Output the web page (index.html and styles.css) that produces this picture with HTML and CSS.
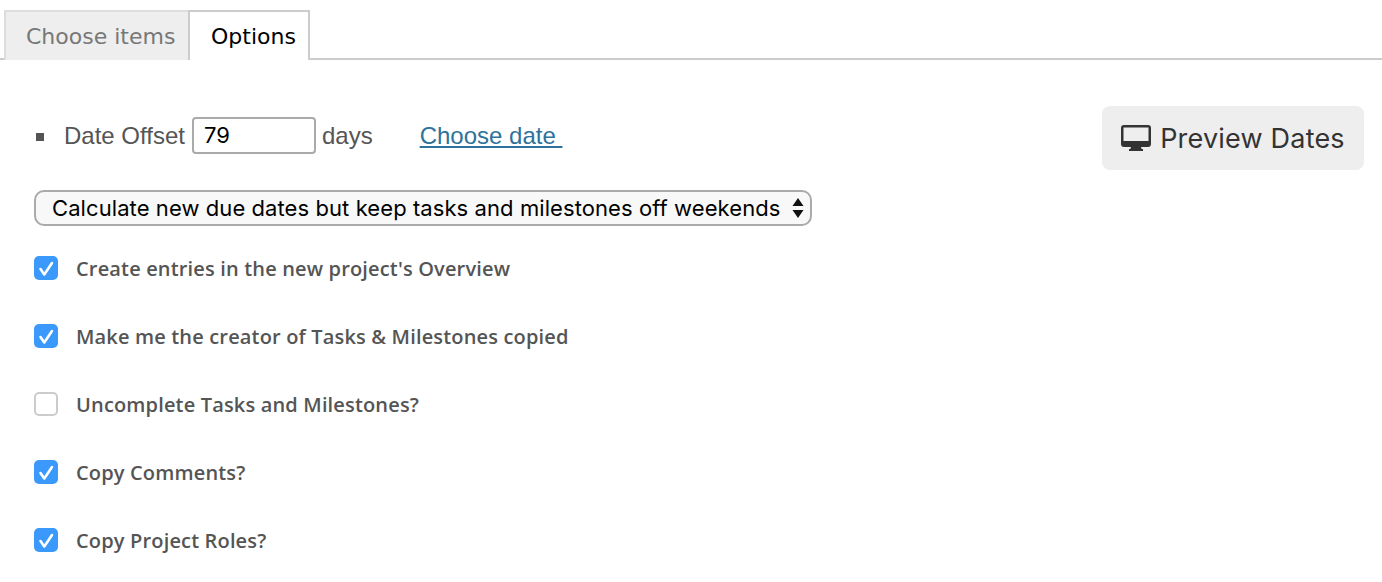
FILE: index.html
```html
<!DOCTYPE html>
<html lang="en">
<head>
<meta charset="utf-8">
<title>Options</title>
<link rel="stylesheet" href="styles.css">
</head>
<body>
<nav class="tabs">
  <a class="tab tab-idle">Choose items</a>
  <a class="tab tab-active">Options</a>
</nav>
<main class="panel">
  <div class="date-row">
    <div class="date-group">
      <span class="bullet"></span>
      <label class="date-label">Date Offset</label>
      <input class="offset" type="text" value="79">
      <span class="days">days</span>
      <a class="choose" href="#">Choose date&nbsp;</a>
    </div>
    <button class="preview" type="button">
      <svg class="monitor" width="30" height="26" viewBox="0 0 30 26"><path fill="#333" fill-rule="evenodd" d="M3 0h24a3 3 0 0 1 3 3v16a3 3 0 0 1-3 3h-7l.6 2H22v2H8v-2h1.400l.6-2H3a3 3 0 0 1-3-3V3a3 3 0 0 1 3-3zM2.500 2.500V16h25V2.500z"/></svg>
      <span>Preview Dates</span>
    </button>
  </div>
  <div class="select-wrap">
    <select class="mode"><option>Calculate new due dates but keep tasks and milestones off weekends</option></select>
    <svg class="arrows" width="12" height="22" viewBox="0 0 12 22"><path fill="#111" d="M6 1l5.500 8H.5zM6 21L.5 13h11z"/></svg>
  </div>
  <ul class="checks">
    <li class="check"><span class="box on"><svg width="24" height="24" viewBox="0 0 24 24"><path fill="none" stroke="#fff" stroke-width="2.600" stroke-linecap="round" stroke-linejoin="round" d="M6.500 13l3.800 5.500 7.700-11.500"/></svg></span><span class="text">Create entries in the new project's Overview</span></li>
    <li class="check"><span class="box on"><svg width="24" height="24" viewBox="0 0 24 24"><path fill="none" stroke="#fff" stroke-width="2.600" stroke-linecap="round" stroke-linejoin="round" d="M6.500 13l3.800 5.500 7.700-11.500"/></svg></span><span class="text">Make me the creator of Tasks &amp; Milestones copied</span></li>
    <li class="check"><span class="box"></span><span class="text">Uncomplete Tasks and Milestones?</span></li>
    <li class="check"><span class="box on"><svg width="24" height="24" viewBox="0 0 24 24"><path fill="none" stroke="#fff" stroke-width="2.600" stroke-linecap="round" stroke-linejoin="round" d="M6.500 13l3.800 5.500 7.700-11.500"/></svg></span><span class="text">Copy Comments?</span></li>
    <li class="check"><span class="box on"><svg width="24" height="24" viewBox="0 0 24 24"><path fill="none" stroke="#fff" stroke-width="2.600" stroke-linecap="round" stroke-linejoin="round" d="M6.500 13l3.800 5.500 7.700-11.500"/></svg></span><span class="text">Copy Project Roles?</span></li>
  </ul>
</main>
</body>
</html>
```
FILE: styles.css
```css
* { box-sizing: border-box; }
html, body { margin: 0; height: 582px; overflow: hidden; background: #fff; }
body { font-family: "Liberation Sans", Arial, sans-serif; color: #555; }

.tabs {
  display: flex;
  height: 60px;
  padding: 10px 0 0 4px;
  border-bottom: 2px solid #ccc;
}
.tab {
  height: 50px;
  display: flex;
  align-items: center;
  padding-left: 20px;
  font-family: "DejaVu Sans", Verdana, sans-serif;
  font-size: 22px;
  border: 2px solid #ddd;
  border-bottom: 0;
}
.tab-idle { width: 184px; background: #eee; color: #777; border-right: 0; }
.tab-active { width: 122px; padding-left: 21px; background: #fff; color: #000; border-color: #ccc; }

.panel { padding: 46px 18px 0 34px; }

.date-row { display: flex; align-items: center; height: 64px; font-size: 24px; }
.date-group { display: flex; align-items: center; margin-bottom: 4px; }
.bullet { width: 8px; height: 8px; background: #555; margin: 2px 20px 0 2px; }
.offset {
  width: 124px;
  height: 37px;
  margin: 0 6px 2px 7px;
  padding: 0 10px;
  border: 2px solid #aaa;
  border-radius: 4px;
  font: 22px Inter, sans-serif;
  color: #000;
  background: #fff;
}
.choose { margin-left: 47px; color: #2f7299; text-decoration: underline; }
.preview {
  margin-left: auto;
  width: 262px;
  height: 64px;
  display: flex;
  align-items: center;
  justify-content: center;
  gap: 9px;
  border: 0;
  border-radius: 8px;
  background: #eee;
  color: #333;
  font: 27px Inter, sans-serif;
  letter-spacing: 0.2px;
}
.monitor { flex: none; }

.select-wrap { position: relative; width: 778px; height: 36px; margin-top: 20px; }
.mode {
  appearance: none;
  width: 100%;
  height: 100%;
  padding: 0 0 0 16px;
  border: 2px solid #aaa;
  border-radius: 10px;
  background: #f8f8f8;
  color: #000;
  font: 22px Inter, sans-serif;
  letter-spacing: 0.08px;
}
.arrows { position: absolute; right: 8px; top: 7px; pointer-events: none; }

.checks { list-style: none; margin: 30px 0 0; padding: 0; }
.check { display: flex; align-items: center; height: 24px; margin-bottom: 44px; }
.box {
  flex: none;
  width: 24px;
  height: 24px;
  border: 2px solid #ccc;
  border-radius: 5px;
  background: #fff;
  margin-right: 18px;
}
.box.on { border: 0; background: #3b99fc; }
.box svg { display: block; }
.text { font-family: "Open Sans", sans-serif; font-weight: 600; font-size: 20px; letter-spacing: 0.16px; color: #555; }
```
